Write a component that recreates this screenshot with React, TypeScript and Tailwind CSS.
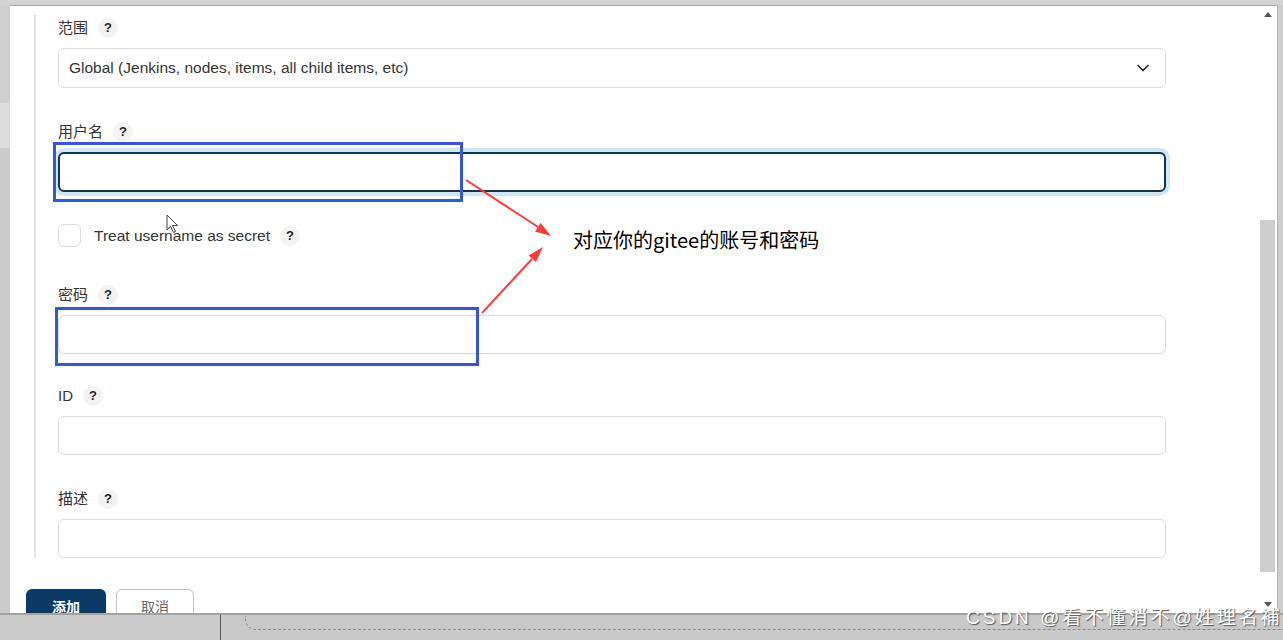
import { ChevronDown } from 'lucide-react';

function Help() {
  return (
    <span className="ml-[10px] inline-flex h-5 w-5 items-center justify-center rounded-full bg-[#f3f3f3] text-[13px] font-bold text-[#222]">
      ?
    </span>
  );
}

function Label({ text }: { text: string }) {
  return (
    <div className="flex h-6 items-center text-[15px] text-[#333]">
      <span>{text}</span>
      <Help />
    </div>
  );
}

function TextField({ label, className }: { label: string; className: string }) {
  return (
    <div className={className}>
      <Label text={label} />
      <div className="mt-2 h-[39px] w-full rounded-md border border-[#d9d9d9] bg-white" />
    </div>
  );
}

export default function App() {
  return (
    <div
      className="relative h-[640px] w-[1283px] overflow-hidden bg-[#c9c9c9]"
      style={{ fontFamily: '"Liberation Sans", "Noto Sans CJK SC", sans-serif' }}
    >
      <div className="flex h-[613px] bg-[#d3d3d3] pt-[5px]">
        {/* left strip */}
        <div className="flex w-[10px] flex-col">
          <div className="h-[98px] bg-[#cfcfcf]" />
          <div className="h-[45px] bg-[#dcdcdc]" />
          <div className="flex-1 bg-[#cbcbcb]" />
        </div>

        {/* dialog */}
        <div className="flex w-[1267px] overflow-hidden border-t border-[#a8a8a8] bg-white">
          <div className="flex-1 pl-4 pt-[9px]">
            <div className="ml-2 w-fit border-l-2 border-[#e3e3e3] pl-[22px] pt-px">
              <div className="w-[1108px]">
                {/* 范围 */}
                <div>
                  <Label text="范围" />
                  <div className="mt-2 flex h-10 items-center justify-between rounded-md border border-[#d9d9d9] pl-[10px] pr-[12px] text-[15.5px] text-[#333]">
                    <span>Global (Jenkins, nodes, items, all child items, etc)</span>
                    <ChevronDown className="h-5 w-5 text-[#222]" strokeWidth={2} />
                  </div>
                </div>

                {/* 用户名 */}
                <div className="mt-8">
                  <Label text="用户名" />
                  <div className="mt-2 h-10 w-full rounded-md border-2 border-[#10344f] bg-white ring-4 ring-[#cfe7f6]" />
                </div>

                {/* checkbox */}
                <div className="mt-8 flex h-[23px] items-center">
                  <span className="h-[23px] w-[23px] rounded-md border-[1.5px] border-[#dadada] bg-white" />
                  <span className="ml-[13px] text-[15.5px] text-[#333]">Treat username as secret</span>
                  <Help />
                </div>

                <TextField label="密码" className="mt-[36px]" />
                <TextField label="ID" className="mt-[30px]" />
                <TextField label="描述" className="mt-8" />
              </div>
            </div>

            {/* buttons */}
            <div className="mt-[31px] flex gap-[10px]">
              <button className="flex h-9 w-20 items-center justify-center rounded-md bg-[#0c3a66] text-[14px] font-bold text-white">
                添加
              </button>
              <button className="flex h-9 w-[78px] items-center justify-center rounded-md border border-[#c4c4c4] bg-white text-[14px] text-[#666]">
                取消
              </button>
            </div>
          </div>

          {/* scrollbar */}
          <div className="mr-[2px] flex w-[15px] flex-col">
            <div className="flex h-[17px] items-center justify-center">
              <span className="h-0 w-0 border-x-[4px] border-b-[5px] border-x-transparent border-b-[#555]" />
            </div>
            <div className="mt-[197px] h-[352px] bg-[#cdcdcd]" />
            <div className="flex-1" />
            <div className="flex h-[17px] items-center justify-center">
              <span className="h-0 w-0 border-x-[4px] border-t-[5px] border-x-transparent border-t-[#555]" />
            </div>
          </div>
        </div>

        {/* right strip */}
        <div className="flex-1 border-l border-[#b5b5b5] bg-[#cdcdcd]" />
      </div>

      {/* bottom area */}
      <div className="flex h-[27px] border-t-2 border-[#a3a3a3] bg-[#c9c9c9]">
        <div className="w-[221px] border-r border-[#555] bg-[#cbcbcb]" />
        <div className="ml-[24px] mt-[1px] h-[14px] flex-1 rounded-bl-[10px] border-b border-l border-dashed border-[#8a8a8a]" />
      </div>

      {/* annotations */}
      <div className="pointer-events-none absolute left-[53px] top-[142px] h-[60px] w-[410px] border-[3px] border-[#3557d6]" />
      <div className="pointer-events-none absolute left-[55px] top-[307px] h-[59px] w-[424px] border-[3px] border-[#3557d6]" />

      <svg className="pointer-events-none absolute left-0 top-0" width="1283" height="640">
        <line x1="466" y1="180" x2="538" y2="227" stroke="#ff3b3b" strokeWidth="2" />
        <polygon points="551,236 535,231.5 540.5,223" fill="#ff3b3b" />
        <line x1="482" y1="313" x2="532" y2="259" stroke="#ff3b3b" strokeWidth="2" />
        <polygon points="543,247 536,262 528.5,255.5" fill="#ff3b3b" />
        {/* mouse cursor */}
        <path
          d="M167 215 L167 230 L170.5 226.5 L173.5 232.5 L175.5 231.5 L172.5 225.5 L177.5 225.5 Z"
          fill="#fff"
          stroke="#444"
          strokeWidth="1"
        />
      </svg>

      <div
        className="absolute left-[573px] top-[226px] text-[20px] leading-[28px] text-black"
        style={{ fontFamily: '"Noto Sans CJK SC", sans-serif' }}
      >
        对应你的gitee的账号和密码
      </div>

      <div className="absolute left-[966px] top-[605px] text-[19px] leading-[26px] tracking-[3px] text-white [text-shadow:1px_1px_1px_#555]">
        CSDN @看不懂消不@姓理名補
      </div>
    </div>
  );
}
